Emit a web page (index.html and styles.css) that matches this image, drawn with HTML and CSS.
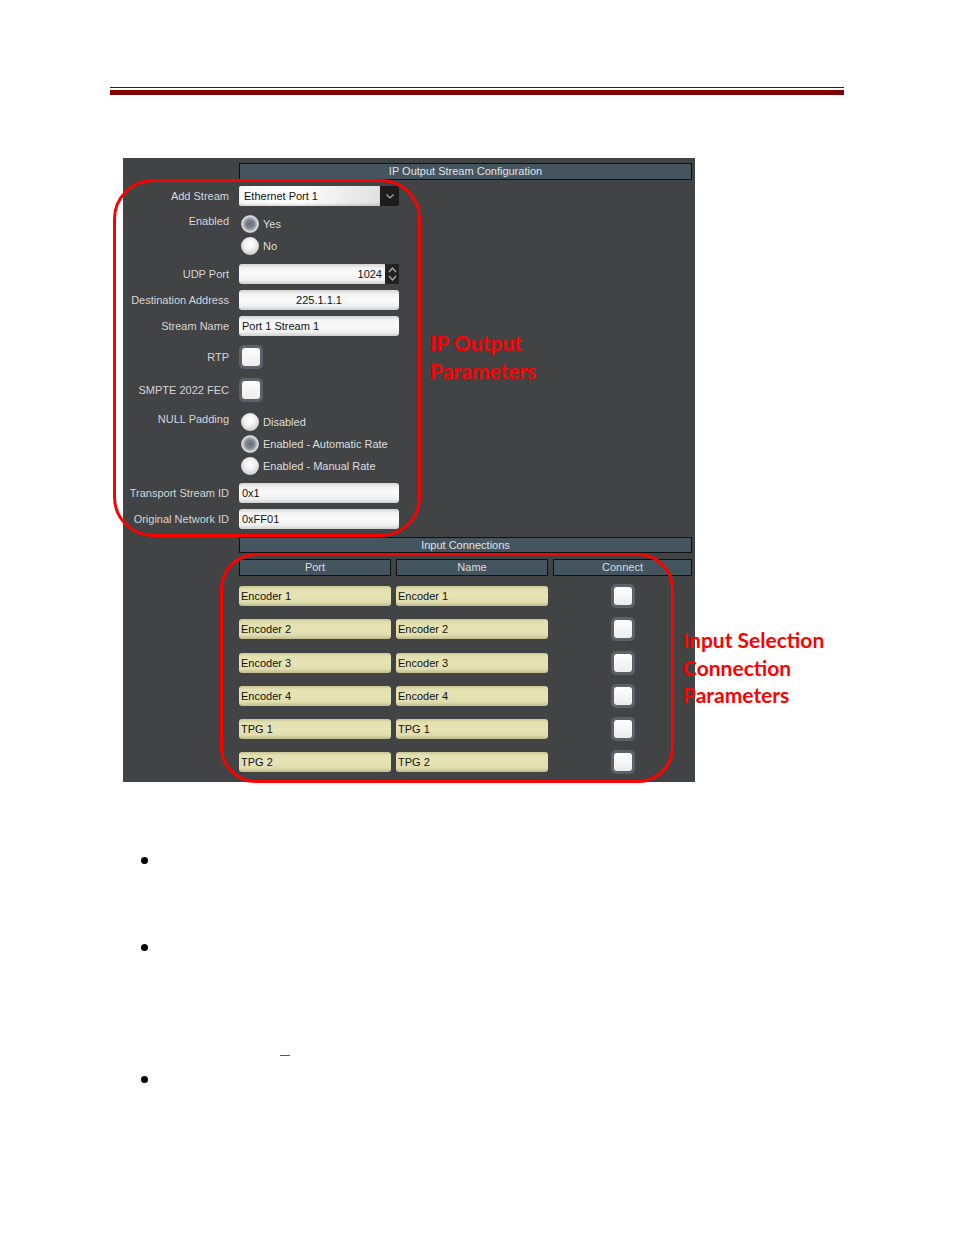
FILE: index.html
```html
<!DOCTYPE html>
<html lang="en">
<head>
<meta charset="utf-8">
<title>IP Output Stream Configuration</title>
<link rel="stylesheet" href="styles.css">
</head>
<body>
<div class="page">
  <div class="rule"><div class="rule-thin"></div><div class="rule-thick"></div></div>

  <div class="figure">
    <div class="panel">
      <div class="bar title-bar">IP Output Stream Configuration</div>

      <div class="row mt6">
        <div class="label">Add Stream</div>
        <div class="select">
          <span class="select-text">Ethernet Port 1</span>
          <span class="select-btn"><svg width="8" height="5" viewBox="0 0 8 5"><polyline points="0.5,0.5 4,4 7.5,0.5" fill="none" stroke="#a8a8a8" stroke-width="1.2"/></svg></span>
        </div>
      </div>

      <div class="row row-top mt7">
        <div class="label">Enabled</div>
        <div class="radios">
          <div class="opt"><span class="radio on"></span>Yes</div>
          <div class="opt"><span class="radio"></span>No</div>
        </div>
      </div>

      <div class="row mt7">
        <div class="label">UDP Port</div>
        <div class="spin">
          <span class="input spin-input">1024</span>
          <span class="spin-btn"><svg width="9" height="18" viewBox="0 0 9 18"><polyline points="1,7 4.5,3 8,7" fill="none" stroke="#b0b0b0" stroke-width="1.2"/><polyline points="1,11 4.5,15 8,11" fill="none" stroke="#b0b0b0" stroke-width="1.2"/></svg></span>
        </div>
      </div>

      <div class="row mt6">
        <div class="label">Destination Address</div>
        <div class="input center">225.1.1.1</div>
      </div>

      <div class="row mt6">
        <div class="label">Stream Name</div>
        <div class="input">Port 1 Stream 1</div>
      </div>

      <div class="row mt9">
        <div class="label">RTP</div>
        <div class="check"><span class="check-inner"></span></div>
      </div>

      <div class="row mt9">
        <div class="label">SMPTE 2022 FEC</div>
        <div class="check"><span class="check-inner"></span></div>
      </div>

      <div class="row row-top mt9">
        <div class="label">NULL Padding</div>
        <div class="radios">
          <div class="opt"><span class="radio"></span>Disabled</div>
          <div class="opt"><span class="radio on"></span>Enabled - Automatic Rate</div>
          <div class="opt"><span class="radio"></span>Enabled - Manual Rate</div>
        </div>
      </div>

      <div class="row mt6">
        <div class="label">Transport Stream ID</div>
        <div class="input">0x1</div>
      </div>

      <div class="row mt6">
        <div class="label">Original Network ID</div>
        <div class="input">0xFF01</div>
      </div>

      <div class="bar section-bar">Input Connections</div>

      <div class="grid thead">
        <div class="th">Port</div>
        <div class="th">Name</div>
        <div class="th">Connect</div>
      </div>

      <div class="grid tbody">
        <div class="yinput">Encoder 1</div><div class="yinput">Encoder 1</div><div class="cell-check"><div class="check"><span class="check-inner"></span></div></div>
        <div class="yinput">Encoder 2</div><div class="yinput">Encoder 2</div><div class="cell-check"><div class="check"><span class="check-inner"></span></div></div>
        <div class="yinput">Encoder 3</div><div class="yinput">Encoder 3</div><div class="cell-check"><div class="check"><span class="check-inner"></span></div></div>
        <div class="yinput">Encoder 4</div><div class="yinput">Encoder 4</div><div class="cell-check"><div class="check"><span class="check-inner"></span></div></div>
        <div class="yinput">TPG 1</div><div class="yinput">TPG 1</div><div class="cell-check"><div class="check"><span class="check-inner"></span></div></div>
        <div class="yinput">TPG 2</div><div class="yinput">TPG 2</div><div class="cell-check"><div class="check"><span class="check-inner"></span></div></div>
      </div>
    </div>

    <div class="oval oval-output"></div>
    <div class="oval oval-input"></div>
    <div class="note note-output">IP Output<br>Parameters</div>
    <div class="note note-input">Input Selection<br>Connection<br>Parameters</div>
  </div>

  <div class="notes">
    <div class="bullet b1"></div>
    <div class="bullet b2"></div>
    <div class="dash"></div>
    <div class="bullet b3"></div>
  </div>
</div>
</body>
</html>
```

FILE: styles.css
```css
html, body {
  margin: 0;
  padding: 0;
  background: #ffffff;
}

body {
  font-family: "Liberation Sans", Arial, sans-serif;
  width: 954px;
  height: 1235px;
  overflow: hidden;
}

.page {
  padding-top: 87px;
}

/* header rule */
.rule {
  margin: 0 110px;
}
.rule-thin {
  height: 1px;
  background: #7a0000;
}
.rule-thick {
  margin-top: 2px;
  height: 5px;
  background: #800000;
}

/* figure */
.figure {
  position: relative;
  margin-top: 63px;
  height: 624px;
}

.panel {
  margin-left: 123px;
  width: 572px;
  height: 624px;
  box-sizing: border-box;
  background: #424345;
  padding: 5px 3px 10px 116px;
  font-size: 11px;
  color: #d9d9d9;
}

.bar {
  box-sizing: border-box;
  background: #45555f;
  border: 1px solid #0e1012;
  color: #e2e2e2;
  text-align: center;
  font-size: 11px;
}
.title-bar {
  height: 17px;
  line-height: 15px;
}
.section-bar {
  margin-top: 8px;
  height: 16px;
  line-height: 14px;
}

.row {
  display: flex;
  align-items: center;
  margin-left: -116px;
}
.row-top {
  align-items: flex-start;
}
.mt6 { margin-top: 6px; }
.mt7 { margin-top: 7px; }
.mt9 { margin-top: 9px; }

.label {
  width: 106px;
  margin-right: 10px;
  text-align: right;
  white-space: nowrap;
  line-height: 16px;
  color: #d6d6d6;
  flex-shrink: 0;
}

.input {
  box-sizing: border-box;
  width: 160px;
  height: 20px;
  line-height: 20px;
  padding: 0 3px;
  border-radius: 3px;
  background: linear-gradient(#d4d4d4 0, #f3f3f3 4px, #fafafa 50%, #f0f0f0 16px, #d0d0d0 100%);
  color: #111;
  white-space: nowrap;
}
.center { text-align: center; }

.select {
  box-sizing: border-box;
  width: 160px;
  height: 20px;
  display: flex;
  border-radius: 2px;
  overflow: hidden;
}
.select-text {
  flex: 1;
  line-height: 20px;
  padding-left: 5px;
  color: #111;
  background: linear-gradient(90deg, #f6f6f6, #ffffff 40%, #e0e0e0);
  box-shadow: inset 0 -2px 2px rgba(0,0,0,0.12);
}
.select-btn {
  width: 19px;
  background: #1d1d1e;
  display: flex;
  align-items: center;
  justify-content: center;
}

.spin {
  display: flex;
  width: 160px;
  height: 20px;
}
.spin-input {
  width: 146px;
  text-align: right;
  border-radius: 3px 0 0 3px;
}
.spin-btn {
  width: 14px;
  background: #222223;
  display: flex;
  align-items: center;
  justify-content: center;
}

.radios {
  display: flex;
  flex-direction: column;
}
.opt {
  height: 22px;
  display: flex;
  align-items: center;
  color: #dedede;
  white-space: nowrap;
}
.radio {
  width: 18px;
  height: 18px;
  margin: 0 4px 0 2px;
  border-radius: 50%;
  background: radial-gradient(circle at 50% 40%, #ffffff 0, #f2f2f2 35%, #cfcfcf 75%, #a8a8a8 100%);
  flex-shrink: 0;
}
.radio.on {
  background: radial-gradient(circle at 50% 50%, #66707c 0, #7a838e 4px, #9ba1a7 5.5px, #c7c8ca 7px, #dcdcdc 8px, #b0b0b0 9px);
}

.check {
  box-sizing: border-box;
  width: 24px;
  height: 24px;
  border-radius: 5px;
  background: #5c626a;
  padding: 3px;
}
.check-inner {
  display: block;
  width: 18px;
  height: 18px;
  border-radius: 3px;
  background: linear-gradient(#ffffff, #ececec);
}

/* table */
.grid {
  display: grid;
  grid-template-columns: 152px 152px 139px;
  column-gap: 5px;
}
.thead {
  margin-top: 6px;
}
.th {
  box-sizing: border-box;
  height: 17px;
  line-height: 15px;
  background: #45555f;
  border: 1px solid #0e1012;
  color: #dcdcdc;
  text-align: center;
}
.tbody {
  margin-top: 10px;
  row-gap: 13.3px;
}
.yinput {
  box-sizing: border-box;
  height: 20px;
  line-height: 20px;
  padding: 0 2px;
  border-radius: 3px;
  background: linear-gradient(#c7c597 0, #e2e0b0 3px, #e6e4b4 50%, #e0deae 16px, #bebc8e 100%);
  color: #111;
  white-space: nowrap;
}
.cell-check {
  display: flex;
  justify-content: center;
  align-items: center;
  height: 20px;
}

/* annotations */
.oval {
  position: absolute;
  box-sizing: border-box;
  border: 3px solid #ff0000;
}
.oval-output {
  left: 113px;
  top: 21px;
  width: 308px;
  height: 358px;
  border-radius: 40px;
}
.oval-input {
  left: 220px;
  top: 395px;
  width: 454px;
  height: 230px;
  border-radius: 36px;
}
.note {
  position: absolute;
  color: #ff0000;
  font-family: Lato, "Open Sans", sans-serif;
  font-weight: bold;
  font-size: 21px;
  line-height: 28px;
  white-space: nowrap;
}
.note-output {
  left: 430px;
  top: 171px;
}
.note-input {
  left: 683px;
  top: 468px;
  line-height: 27.5px;
}

/* bullets */
.notes {
  padding-left: 141px;
}
.bullet {
  width: 7px;
  height: 7px;
  border-radius: 50%;
  background: #000;
}
.b1 { margin-top: 75px; }
.b2 { margin-top: 80px; }
.dash {
  margin-top: 104px;
  margin-left: 139px;
  width: 10px;
  height: 1px;
  background: #555;
}
.b3 { margin-top: 20px; }
```
